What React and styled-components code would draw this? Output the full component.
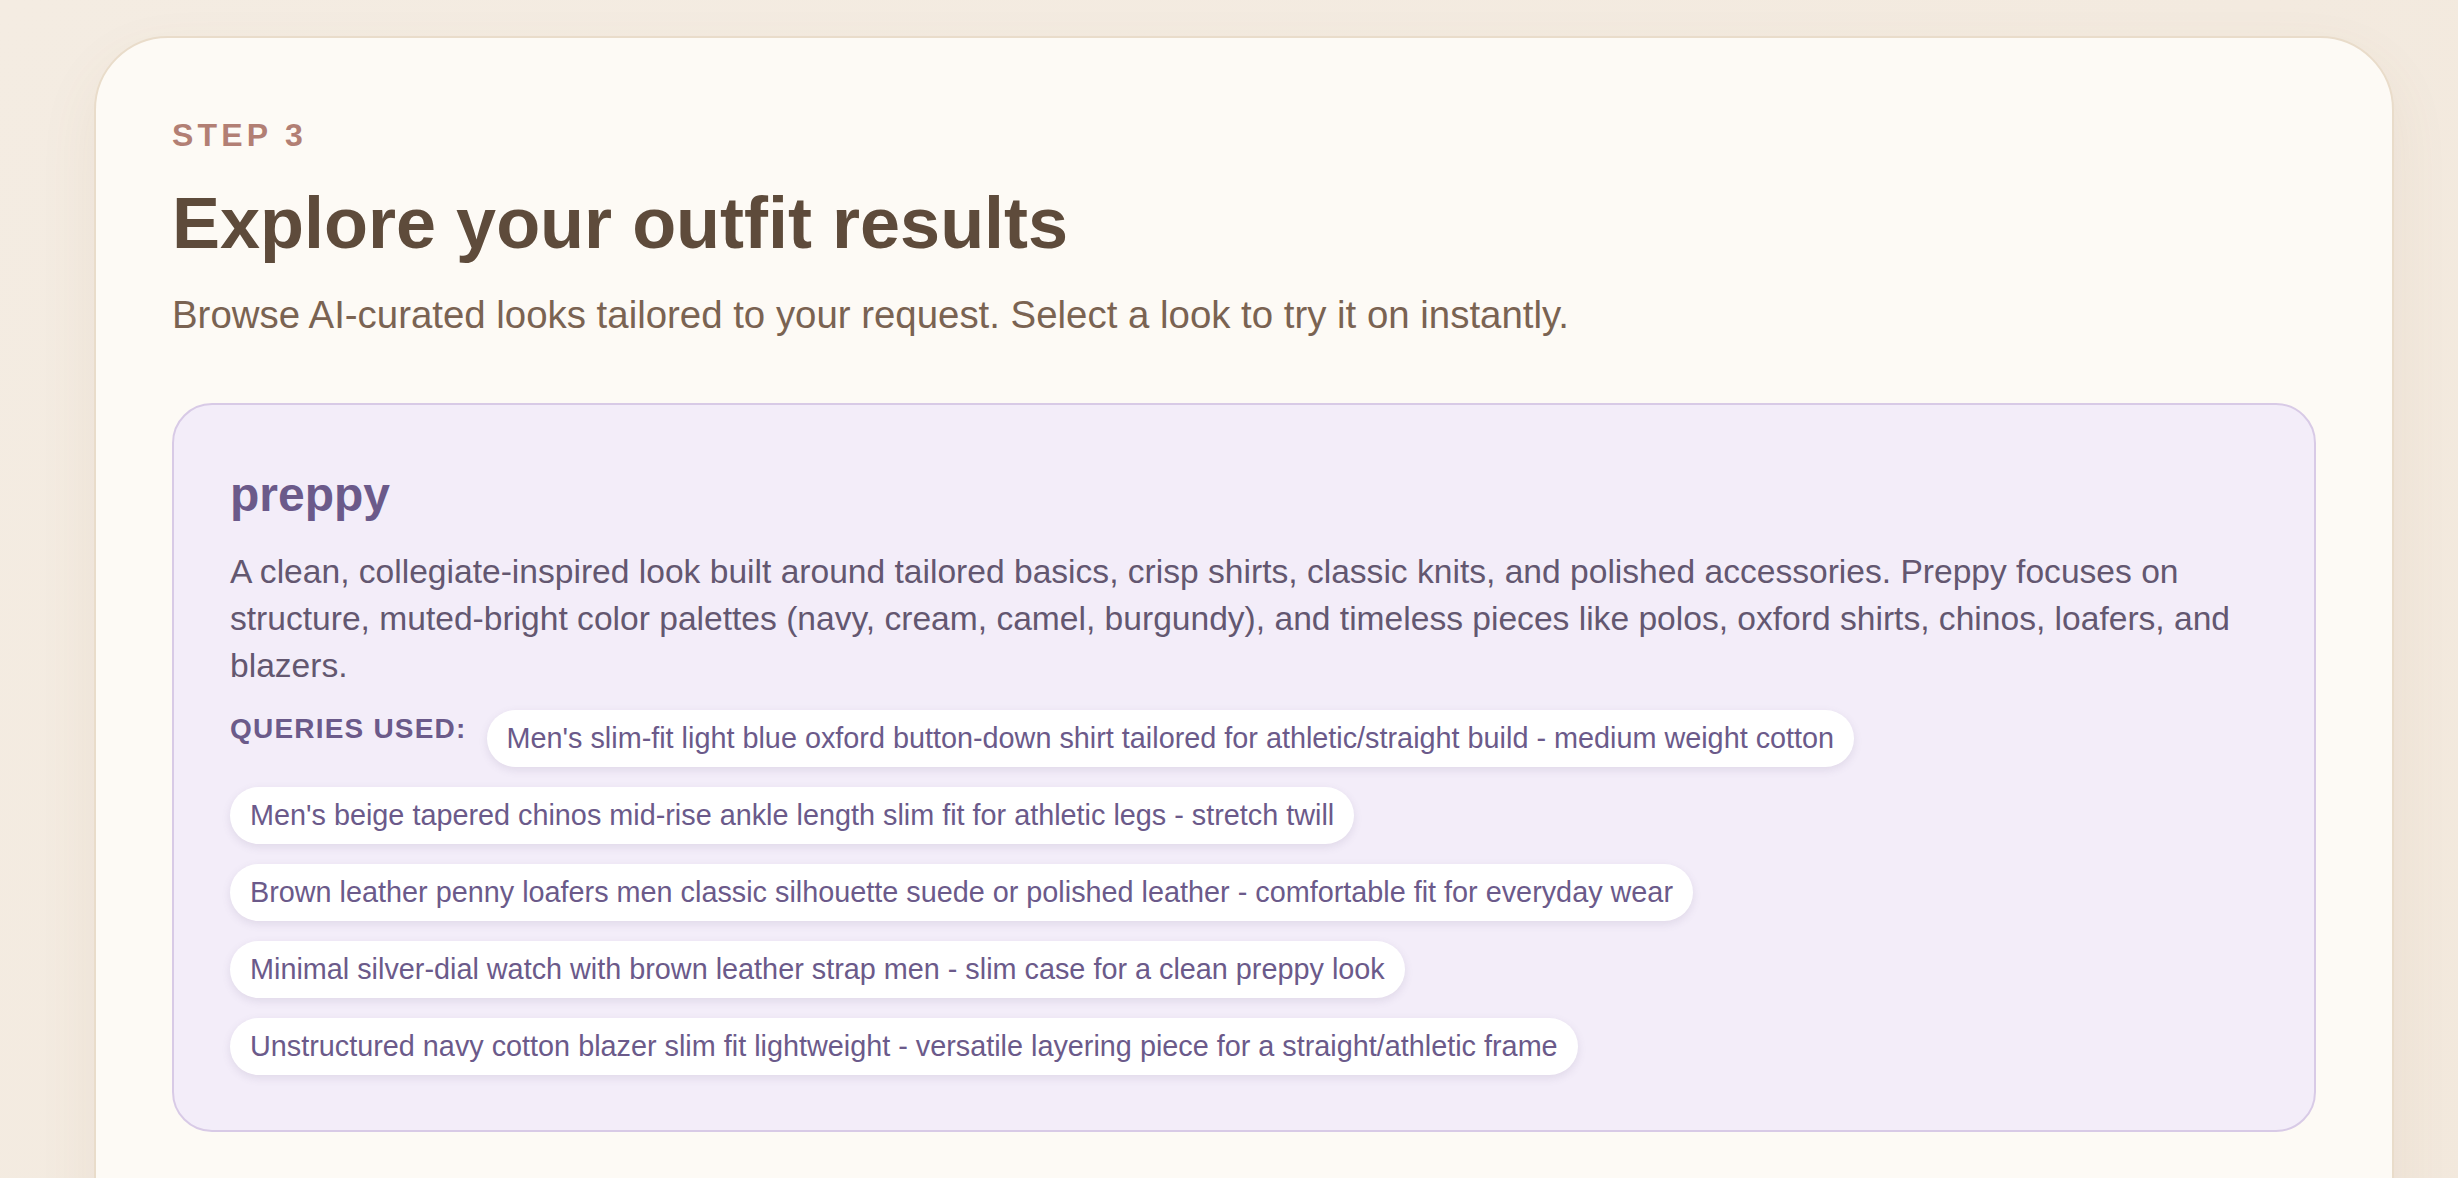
import styled, { createGlobalStyle } from 'styled-components'

const GlobalStyle = createGlobalStyle`
  * {
    box-sizing: border-box;
  }

  body {
    margin: 0;
    font-family: "Liberation Sans", Arial, sans-serif;
    background: linear-gradient(135deg, #f4ece2 0%, #f3eadf 60%, #f2e8dc 100%);
    min-height: 100vh;
  }
`

const Page = styled.main`
  padding: 36px 64px 0 94px;
`

const Panel = styled.section`
  background: #fdfaf5;
  border: 2px solid #e9dcca;
  border-radius: 74px;
  padding: 79px 76px 180px;
  box-shadow: 0 24px 60px rgba(140, 105, 70, 0.08);
`

const Eyebrow = styled.div`
  font-size: 32px;
  font-weight: 700;
  letter-spacing: 4.2px;
  text-transform: uppercase;
  color: #b27f74;
  line-height: 1.15;
`

const Title = styled.h1`
  margin: 28px 0 0;
  font-size: 72px;
  font-weight: 700;
  line-height: 1.15;
  color: #5e4b3b;
`

const Subtitle = styled.p`
  margin: 28px 0 0;
  font-size: 38.4px;
  line-height: 1.15;
  color: #7a6352;
`

const StyleCard = styled.article`
  margin-top: 66px;
  background: #f3edf9;
  border: 2px solid #d8cae6;
  border-radius: 40px;
  padding: 61px 56px 55px;
`

const StyleName = styled.h2`
  margin: 0;
  font-size: 48px;
  font-weight: 700;
  line-height: 1.2;
  color: #6b5a8a;
`

const StyleDescription = styled.p`
  margin: 25px 0 0;
  font-size: 33.6px;
  line-height: 47px;
  color: #635770;
`

const Queries = styled.div`
  margin-top: 21px;
  display: flex;
  flex-wrap: wrap;
  align-items: flex-start;
  gap: 20px;
`

const QueriesLabel = styled.span`
  margin-top: 3px;
  font-size: 28px;
  font-weight: 700;
  letter-spacing: 1.2px;
  line-height: 31px;
  color: #6b5a8a;
  text-transform: uppercase;
`

const QueryChip = styled.span`
  display: inline-block;
  padding: 12px 20px;
  background: #ffffff;
  border-radius: 999px;
  font-size: 28.8px;
  line-height: 33px;
  color: #6b5a8a;
  box-shadow: 0 3px 8px rgba(107, 90, 138, 0.14);
`

const queries = [
  "Men's slim-fit light blue oxford button-down shirt tailored for athletic/straight build - medium weight cotton",
  "Men's beige tapered chinos mid-rise ankle length slim fit for athletic legs - stretch twill",
  'Brown leather penny loafers men classic silhouette suede or polished leather - comfortable fit for everyday wear',
  'Minimal silver-dial watch with brown leather strap men - slim case for a clean preppy look',
  'Unstructured navy cotton blazer slim fit lightweight - versatile layering piece for a straight/athletic frame',
]

const App = () => {
  return (
    <>
      <GlobalStyle />
      <Page>
        <Panel>
          <Eyebrow>Step 3</Eyebrow>
          <Title>Explore your outfit results</Title>
          <Subtitle>
            Browse AI-curated looks tailored to your request. Select a look to try it on instantly.
          </Subtitle>

          <StyleCard>
            <StyleName>preppy</StyleName>
            <StyleDescription>
              A clean, collegiate-inspired look built around tailored basics, crisp shirts, classic
              knits, and polished accessories. Preppy focuses on structure, muted-bright color
              palettes (navy, cream, camel, burgundy), and timeless pieces like polos, oxford shirts,
              chinos, loafers, and blazers.
            </StyleDescription>
            <Queries>
              <QueriesLabel>Queries used:</QueriesLabel>
              {queries.map((q) => (
                <QueryChip key={q}>{q}</QueryChip>
              ))}
            </Queries>
          </StyleCard>
        </Panel>
      </Page>
    </>
  )
}

export default App
